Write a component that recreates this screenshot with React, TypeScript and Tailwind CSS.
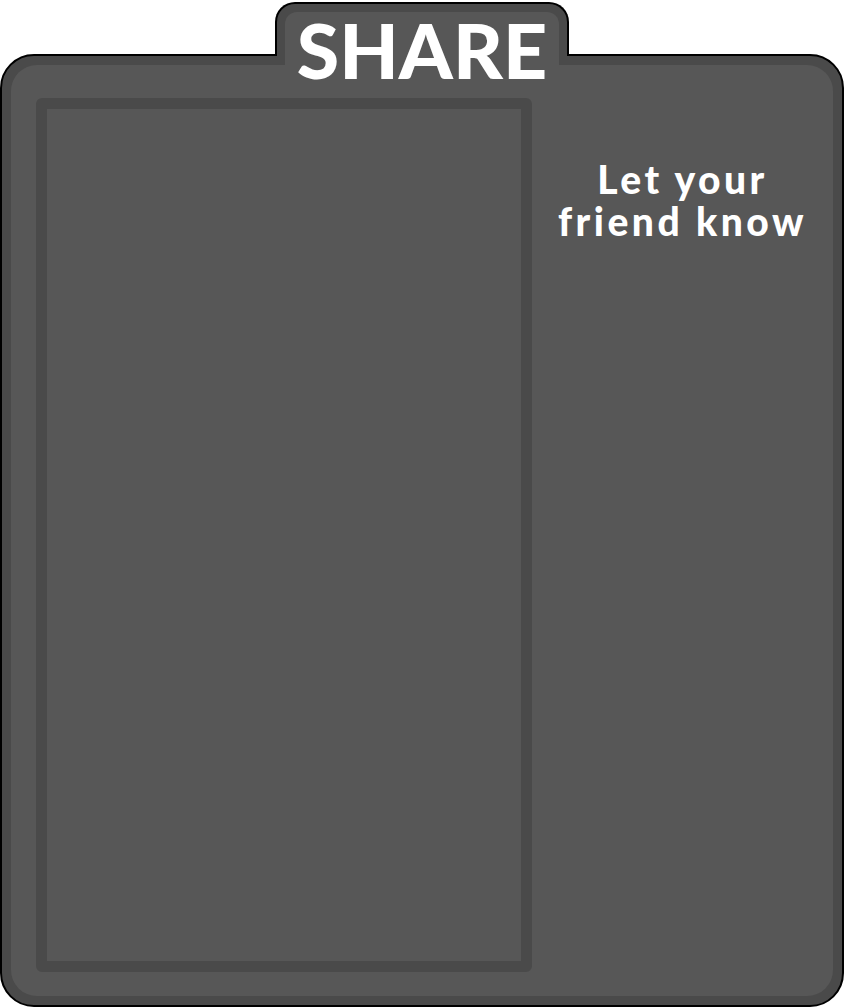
export default function App() {
  return (
    <div className="w-[844px] h-[1008px] bg-white flex flex-col pt-[2px]" style={{ fontFamily: "Lato, 'Liberation Sans', sans-serif" }}>
      {/* Tab */}
      <div className="relative z-10 ml-[275px] w-[294px] h-[54px] border-2 border-b-0 border-black rounded-t-[20px] bg-[#4a4a4a] pt-[8px] px-[8px]">
        <div className="h-[54px] bg-[#575757] rounded-t-[12px] flex justify-center">
          <span className="text-white font-black text-[77px] leading-none -mt-[1px]">SHARE</span>
        </div>
      </div>

      {/* Panel */}
      <div className="-mt-[2px] h-[953px] border-2 border-black rounded-[34px] bg-[#4a4a4a] p-[9px] flex">
        <div className="flex-1 bg-[#575757] rounded-[26px] flex">
          <div className="mt-[33px] ml-[25px] w-[496px] h-[874px] border-[11px] border-[#4a4a4a] rounded-[6px]" />
          <div className="flex-1 flex flex-col items-center pt-[93px] text-white font-black text-[39px] leading-[42px] tracking-[3.5px] text-center">
            <span>Let your</span>
            <span>friend know</span>
          </div>
        </div>
      </div>
    </div>
  );
}
